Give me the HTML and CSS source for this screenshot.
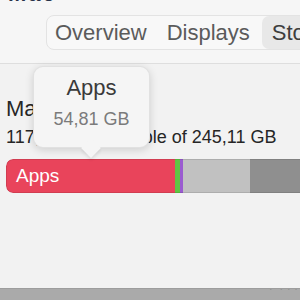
FILE: index.html
```html
<!DOCTYPE html>
<html lang="en">

<head>
    <meta charset="UTF-8">
    <meta name="viewport" content="width=device-width, initial-scale=1.0">
    <link rel="stylesheet" href="styles.css">
</head>

<body>
    <div class="Window">
        <div class="Header">
            <div class="Title"><span>Mac</span></div>
            <div class="Tabs">
                <div class="Tab">Overview</div>
                <div class="TabSep"></div>
                <div class="Tab">Displays</div>
                <div class="Tab Selected">Storage</div>
            </div>
        </div>

        <div class="Content">
            <div class="DiskName">Macintosh HD</div>
            <div class="DiskInfo">117,50 GB available of 245,11 GB</div>

            <div class="Bar">
                <div class="Segment Apps" style="width: 169px;">Apps</div>
                <div class="Segment Green" style="width: 5px;"></div>
                <div class="Segment Purple" style="width: 3px;"></div>
                <div class="Segment Light" style="width: 67px;"></div>
                <div class="Segment Dark"></div>
            </div>

            <div class="Tooltip">
                <div class="TooltipTitle">Apps</div>
                <div class="TooltipValue">54,81 GB</div>
            </div>
        </div>

        <div class="Footer"><span>— · &nbsp;· · ·</span></div>
    </div>
</body>

</html>
```

FILE: styles.css
```css
body {
    margin: 0;
    font-family: 'Liberation Sans', Arial, sans-serif;
    background-color: #f2f2f2;
    overflow: hidden;
}

.Window {
    height: 300px;
    display: flex;
    flex-direction: column;
    overflow: hidden;
}

.Header {
    height: 64px;
    box-sizing: border-box;
    background-color: #f6f6f6;
    border-bottom: 1px solid #dedede;
}

.Title {
    height: 3px;
    overflow: hidden;
    padding-left: 8px;
}

.Title span {
    display: block;
    margin-top: -17px;
    font-size: 22px;
    line-height: 22px;
    font-weight: bold;
    color: #28324a;
    letter-spacing: 2px;
}

.Tabs {
    display: flex;
    align-items: center;
    margin-top: 12px;
    margin-left: 46px;
    height: 35px;
    width: 300px;
    box-sizing: border-box;
    border: 1px solid #e3e3e3;
    border-radius: 8px;
    background-color: #f8f8f8;
    white-space: nowrap;
}

.Tab {
    height: 100%;
    display: flex;
    align-items: center;
    padding: 0 10px 0 10px;
    font-size: 22px;
    color: #5b5b5b;
}

.Tab:first-child {
    padding-left: 8px;
}

.Tab.Selected {
    margin-left: 2px;
    background-color: #e8e8e8;
    border-radius: 7px;
    color: #3e3e3e;
}

.TabSep {
    width: 1px;
    height: 21px;
    background-color: #dadada;
}

.Content {
    position: relative;
    flex: 1;
    padding: 32px 0 0 6px;
}

.DiskName {
    font-size: 22px;
    line-height: 26px;
    color: #262626;
}

.DiskInfo {
    margin-top: 4px;
    font-size: 18px;
    line-height: 22px;
    color: #262626;
    white-space: nowrap;
}

.Bar {
    display: flex;
    margin-top: 11px;
    height: 34px;
    border-radius: 7px 0 0 7px;
    overflow: hidden;
}

.Segment {
    height: 100%;
    box-sizing: border-box;
    border-top: 1px solid rgba(0, 0, 0, 0.1);
    border-bottom: 1px solid rgba(0, 0, 0, 0.1);
}

.Apps {
    display: flex;
    align-items: center;
    padding-left: 9px;
    background-color: #e9445b;
    border-left: 1px solid rgba(0, 0, 0, 0.1);
    border-radius: 7px 0 0 7px;
    color: #ffffff;
    font-size: 19px;
}

.Green {
    background-color: #5fc743;
}

.Purple {
    background-color: #9a5bd0;
}

.Light {
    background-color: #c1c1c1;
}

.Dark {
    flex: 1;
    background-color: #8f8f8f;
}

.Tooltip {
    position: absolute;
    left: 33px;
    top: 2px;
    width: 117px;
    height: 82px;
    box-sizing: border-box;
    padding-top: 9px;
    text-align: center;
    background-color: #f5f5f5;
    border: 1px solid rgba(0, 0, 0, 0.08);
    border-radius: 10px;
    box-shadow: 0 2px 8px rgba(0, 0, 0, 0.15);
}

.Tooltip::after {
    content: '';
    position: absolute;
    left: 50px;
    bottom: -8px;
    width: 14px;
    height: 14px;
    background-color: #f5f5f5;
    transform: rotate(45deg);
    box-shadow: 2px 2px 3px rgba(0, 0, 0, 0.08);
}

.TooltipTitle {
    font-size: 22px;
    line-height: 24px;
    color: #3a3a3a;
}

.TooltipValue {
    margin-top: 8px;
    font-size: 18px;
    line-height: 22px;
    color: #7b7b7b;
}

.Footer {
    height: 12px;
    box-sizing: border-box;
    background-color: #aaaaaa;
    border-top: 1px solid #9d9d9d;
    overflow: hidden;
    text-align: right;
    padding-right: 2px;
}

.Footer span {
    display: block;
    margin-top: -7px;
    font-size: 12px;
    line-height: 12px;
    color: #555555;
}
```
